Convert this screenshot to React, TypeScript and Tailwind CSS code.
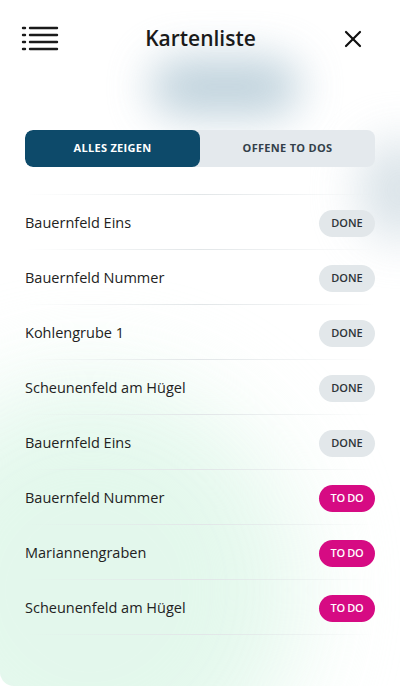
import React from "react";

const items: { name: string; done: boolean }[] = [
  { name: "Bauernfeld Eins", done: true },
  { name: "Bauernfeld Nummer", done: true },
  { name: "Kohlengrube 1", done: true },
  { name: "Scheunenfeld am Hügel", done: true },
  { name: "Bauernfeld Eins", done: true },
  { name: "Bauernfeld Nummer", done: false },
  { name: "Mariannengraben", done: false },
  { name: "Scheunenfeld am Hügel", done: false },
];

function ListIcon() {
  return (
    <svg width="38" height="26" viewBox="0 0 38 26" fill="none" stroke="#1a1a1a" strokeWidth="2.4" strokeLinecap="round">
      {[2, 9, 16, 23].map((y) => (
        <g key={y}>
          <line x1="2" y1={y} x2="4" y2={y} />
          <line x1="9" y1={y} x2="36" y2={y} />
        </g>
      ))}
    </svg>
  );
}

function CloseIcon() {
  return (
    <svg width="18" height="18" viewBox="0 0 18 18" fill="none" stroke="#111" strokeWidth="2.2" strokeLinecap="round">
      <line x1="2" y1="2" x2="16" y2="16" />
      <line x1="16" y1="2" x2="2" y2="16" />
    </svg>
  );
}

export default function App() {
  return (
    <div
      className="relative w-[400px] h-[686px] overflow-hidden bg-white rounded-b-[14px]"
      style={{ fontFamily: '"Open Sans", "Noto Sans", sans-serif' }}
    >
      {/* Hintergrund-Unschärfe */}
      <div className="absolute left-[150px] top-[58px] w-[150px] h-[58px] rounded-full bg-[#aec6d3] blur-[22px] opacity-80" />
      <div className="absolute left-[360px] top-[140px] w-[80px] h-[100px] rounded-full bg-[#cfdbe2] blur-[24px] opacity-80" />
      <div className="absolute left-[-120px] top-[380px] w-[420px] h-[420px] rounded-full bg-[#e0f7ea] blur-[50px] opacity-90" />

      <div className="relative flex flex-col">
        {/* Kopfzeile */}
        <div className="flex items-center h-[78px] pl-[21px] pr-[38px]">
          <div className="w-[40px]">
            <ListIcon />
          </div>
          <h1 className="flex-1 text-center text-[21px] font-semibold text-[#1a1a1a] pl-[18px]">Kartenliste</h1>
          <div className="w-[40px] flex justify-end">
            <CloseIcon />
          </div>
        </div>

        {/* Umschalter */}
        <div className="mx-[25px] mt-[52px] flex h-[37px] rounded-[8px] bg-[#e4e9ed] overflow-hidden text-[11px] font-bold tracking-[0.3px]">
          <div className="flex-1 flex items-center justify-center bg-[#0d4a6a] text-white rounded-[8px]">ALLES ZEIGEN</div>
          <div className="flex-1 flex items-center justify-center text-[#33404a]">OFFENE TO DOS</div>
        </div>

        {/* Liste */}
        <div className="mt-[27px] mx-[25px]">
          <div className="h-px bg-gradient-to-r from-transparent via-[#e2e6e8] to-transparent" />
          {items.map((it, i) => (
            <div key={i}>
              <div className="flex items-center justify-between h-[54px] pt-[2px]">
                <span className="text-[14.5px] text-[#222]">{it.name}</span>
                {it.done ? (
                  <span className="w-[56px] h-[27px] rounded-full bg-[#e2e7ea] flex items-center justify-center text-[11px] font-semibold text-[#2d3338]">
                    DONE
                  </span>
                ) : (
                  <span className="w-[56px] h-[27px] rounded-full bg-[#d60b83] flex items-center justify-center text-[11px] font-semibold text-white tracking-[-0.3px]">
                    TO DO
                  </span>
                )}
              </div>
              <div className="h-px bg-gradient-to-r from-transparent via-[#e2e6e8] to-transparent" />
            </div>
          ))}
        </div>
      </div>
    </div>
  );
}
